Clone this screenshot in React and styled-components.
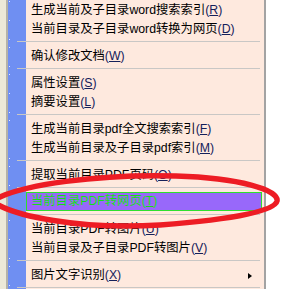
import React from "react";
import styled, { createGlobalStyle } from "styled-components";

const GlobalStyle = createGlobalStyle`
  html, body {
    margin: 0;
    padding: 0;
    background: #ffffff;
    overflow: hidden;
  }
`;

const Screen = styled.div`
  position: relative;
  width: 284px;
  height: 289px;
  display: flex;
  flex-direction: row;
  overflow: hidden;
  background: #ffffff;
`;

const Desktop = styled.div`
  width: 6px;
  flex: none;
  background: #ece9d8;
`;

const Menu = styled.div`
  width: 256px;
  flex: none;
  display: flex;
  flex-direction: column;
  border-left: 2px solid #b4b2a8;
  border-right: 2px solid #a3a3a3;
  background: linear-gradient(to right, #6f8ff2 0, #6f8ff2 18px, #fee9de 18px);
  font-family: "Liberation Sans", "Noto Sans CJK SC", sans-serif;
  font-size: 12.3px;
  color: #000;
`;

const Row = styled.div`
  position: relative;
  height: 19px;
  flex: none;
  display: flex;
  align-items: stretch;
  padding: 0 2px 0 19px;

  &::before {
    content: "";
    position: absolute;
    left: 1px;
    top: 1px;
    width: 1px;
    height: 1px;
    background: #e4eaff;
  }
`;

const Label = styled.div`
  flex: 1;
  display: flex;
  align-items: center;
  justify-content: space-between;
  height: ${(p) => (p.$active ? "16px" : "18px")};
  padding: 0 9px 1px 4px;
  line-height: 16px;
  white-space: nowrap;
  color: ${(p) => (p.$active ? "#16e016" : "#000")};
  background: ${(p) => (p.$active ? "#9868fa" : "transparent")};
  border: 1px solid ${(p) => (p.$active ? "#2ee02e" : "transparent")};
  margin-left: -1px;
`;

const Key = styled.span`
  color: ${(p) => (p.$active ? "#16e016" : "#14205a")};
`;

const Arrow = styled.span`
  width: 0;
  height: 0;
  border-top: 3.5px solid transparent;
  border-bottom: 3.5px solid transparent;
  border-left: 4px solid #000;
  margin-top: 2px;
`;

const Separator = styled.div`
  position: relative;
  height: 8px;
  flex: none;
  display: flex;
  flex-direction: column;
  padding: 3px 4px 0 9px;
  box-sizing: border-box;

  &::before {
    content: "";
    position: absolute;
    left: 1px;
    top: 1px;
    width: 1px;
    height: 1px;
    background: #e4eaff;
  }

  &::after {
    content: "";
    display: block;
    height: 1px;
    background: #c9c7c5;
  }
`;

const Annotation = styled.svg`
  position: absolute;
  left: 0;
  top: 0;
  width: 284px;
  height: 289px;
  pointer-events: none;
`;

const items = [
  { label: "生成当前及子目录word搜索索引", key: "R" },
  { label: "当前目录及子目录word转换为网页", key: "D" },
  "sep",
  { label: "确认修改文档", key: "W" },
  "sep",
  { label: "属性设置", key: "S" },
  { label: "摘要设置", key: "L" },
  "sep",
  { label: "生成当前目录pdf全文搜索索引", key: "F" },
  { label: "生成当前目录及子目录pdf索引", key: "M" },
  "sep",
  { label: "提取当前目录PDF页码", key: "O" },
  "sep",
  { label: "当前目录PDF转网页", key: "T", active: true },
  "sep",
  { label: "当前目录PDF转图片", key: "U" },
  { label: "当前目录及子目录PDF转图片", key: "V" },
  "sep",
  { label: "图片文字识别", key: "X", sub: true },
  "sep",
];

const MenuItem = ({ label, mnemonic, active, sub }) => (
  <Row>
    <Label $active={active}>
      <span>
        {label}
        <Key $active={active}>
          (<u>{mnemonic}</u>)
        </Key>
      </span>
      {sub && <Arrow />}
    </Label>
  </Row>
);

export default function App() {
  return (
    <>
      <GlobalStyle />
      <Screen>
        <Desktop />
        <Menu>
          {items.map((it, i) =>
            it === "sep" ? (
              <Separator key={i} />
            ) : (
              <MenuItem
                key={i}
                label={it.label}
                mnemonic={it.key}
                active={it.active}
                sub={it.sub}
              />
            )
          )}
        </Menu>
        <Annotation viewBox="0 0 284 289">
          <path
            d="M -8 201 C 20 184, 100 174, 176 176 C 240 178, 279 190, 277 201 C 275 210, 240 219, 160 225 C 80 230, 12 216, -8 201 Z"
            fill="none"
            stroke="#ed1c24"
            strokeWidth="5.5"
          />
        </Annotation>
      </Screen>
    </>
  );
}
